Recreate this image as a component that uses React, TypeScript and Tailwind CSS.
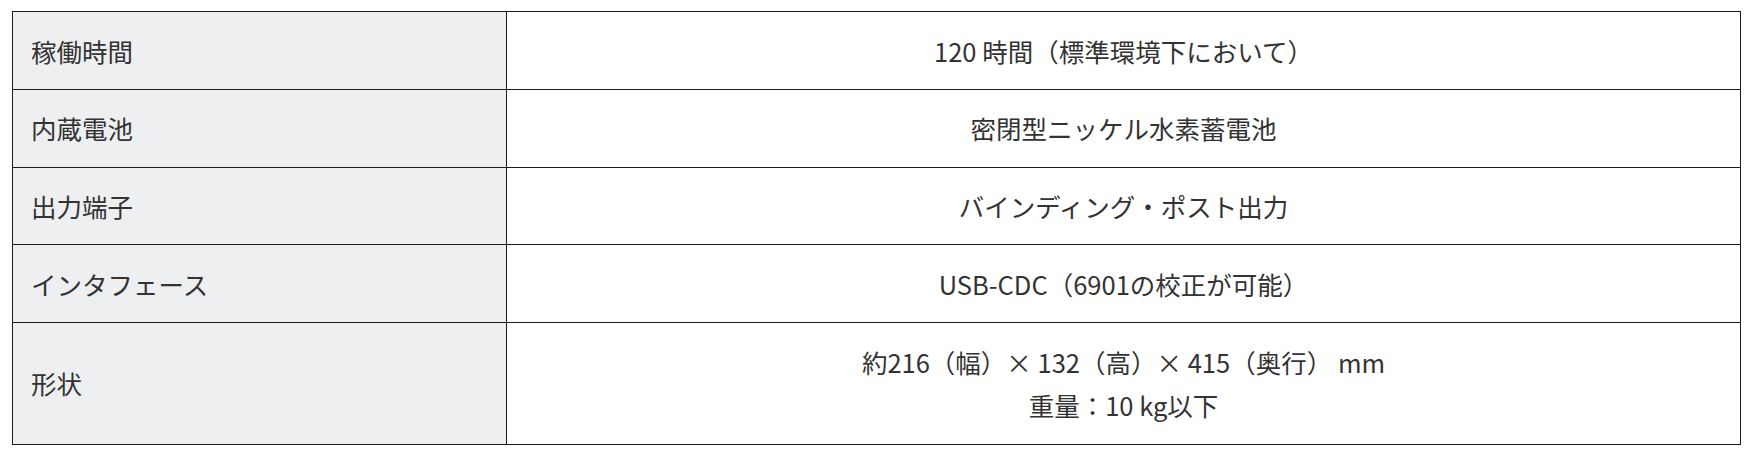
import React from 'react';

type Spec = { label: string; lines: string[] };

const SPECS: Spec[] = [
  { label: '稼働時間', lines: ['120 時間（標準環境下において）'] },
  { label: '内蔵電池', lines: ['密閉型ニッケル水素蓄電池'] },
  { label: '出力端子', lines: ['バインディング・ポスト出力'] },
  { label: 'インタフェース', lines: ['USB-CDC（6901の校正が可能）'] },
  {
    label: '形状',
    lines: ['約216（幅）× 132（高）× 415（奥行） mm', '重量：10 kg以下'],
  },
];

export default function App() {
  return (
    <div
      className="min-h-[454px] w-[1748px] bg-white pl-3 pt-[11px] text-[#333333]"
      style={{ fontFamily: '"Noto Sans CJK JP", "Noto Sans", sans-serif' }}
    >
      <table className="w-[1729px] border-collapse border border-[#1c1c1c] text-[25.5px] leading-[43.75px]">
        <tbody>
          {SPECS.map((spec) => (
            <tr key={spec.label}>
              <td className="w-[494px] border border-[#1c1c1c] bg-[#eeeff1] px-[18px] py-[16.5px] align-middle">
                {spec.label}
              </td>
              <td className="border border-[#1c1c1c] px-[18px] py-[16.5px] text-center align-middle">
                {spec.lines.map((line) => (
                  <div key={line}>{line}</div>
                ))}
              </td>
            </tr>
          ))}
        </tbody>
      </table>
    </div>
  );
}
